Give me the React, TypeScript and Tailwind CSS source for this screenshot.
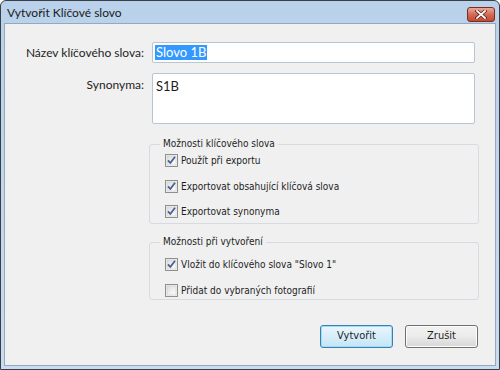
import React from "react";

const font = { fontFamily: 'Lato, "Liberation Sans", sans-serif' };
const tahoma = { fontFamily: '"DejaVu Sans Condensed", "Liberation Sans", sans-serif' };

function Check({ checked }: { checked: boolean }) {
  return (
    <svg width="13" height="13" viewBox="0 0 13 13" className="shrink-0">
      <defs>
        <linearGradient id="cbg" x1="0" y1="0" x2="1" y2="1">
          <stop offset="0" stopColor="#dcdcdc" />
          <stop offset="1" stopColor="#ffffff" />
        </linearGradient>
      </defs>
      <rect x="0.5" y="0.5" width="12" height="12" fill="#f4f4f4" stroke="#8e8f8f" />
      <rect x="2" y="2" width="9" height="9" fill="url(#cbg)" stroke="#c8c8c8" strokeWidth="0.6" />
      {checked && (
        <path d="M3 6.3 L5.3 9 L10 2.8" fill="none" stroke="#4a5f97" strokeWidth="1.8" strokeLinejoin="round" />
      )}
    </svg>
  );
}

function CheckRow({ checked, label }: { checked: boolean; label: string }) {
  return (
    <div className="flex items-center gap-[3px] h-[13px] text-[10px] text-[#1e1e1e]" style={tahoma}>
      <Check checked={checked} />
      <span className="leading-[13px] whitespace-nowrap">{label}</span>
    </div>
  );
}

export default function App() {
  return (
    <div className="w-[500px] h-[370px] overflow-hidden bg-white">
      <div className="w-[500px] h-[370px] border border-[#3a3f45] rounded-t-[6px] bg-gradient-to-b from-[#b9d1ea] to-[#c9dcf0] flex flex-col" style={font}>
        {/* Title bar */}
        <div className="h-[22px] shrink-0 flex items-center justify-between pl-[6px] pr-[4px]">
          <span className="text-[12px] text-[#1a1a1a] leading-none mt-[2px]">Vytvořit Klíčové slovo</span>
          <div className="relative w-[28px] h-[15px] mt-[4px] rounded-[3px] border border-[#7a2c22] bg-gradient-to-b from-[#e9a99b] via-[#d46a55] to-[#c24a34] flex items-center justify-center">
            <svg width="12" height="9" viewBox="0 0 12 9">
              <path d="M2 1 L10 8 M10 1 L2 8" stroke="#5a1a10" strokeWidth="3.2" strokeLinecap="square" />
              <path d="M2 1 L10 8 M10 1 L2 8" stroke="#ffffff" strokeWidth="1.8" strokeLinecap="square" />
            </svg>
          </div>
        </div>
        {/* Content */}
        <div className="flex-1 mx-[3px] mb-[3px] border border-[#93a9c0] bg-[#f0f0f0] pt-[18px] text-[12px] text-[#1e1e1e]">
          {/* Row 1 */}
          <div className="flex items-center">
            <div className="w-[140px] text-right pr-[1px] whitespace-nowrap">Název klíčového slova:</div>
            <div className="ml-[7px] w-[323px] h-[21px] border border-[#b6c6d6] rounded-[2px] bg-white flex items-center pl-[2px]">
              <span className="bg-[#3399ff] text-white px-[1px] text-[13px] leading-[15px]">Slovo 1B</span>
            </div>
          </div>
          {/* Row 2 */}
          <div className="flex items-start mt-[10px]">
            <div className="w-[140px] text-right pr-[1px] pt-[3px]">Synonyma:</div>
            <div className="ml-[7px] w-[323px] h-[51px] border border-[#b6c6d6] rounded-[2px] bg-white pl-[3px] pt-[3px] text-[13px]">S1B</div>
          </div>
          {/* Group 1 */}
          <fieldset className="ml-[144px] mt-[14px] w-[330px] h-[86px] border border-[#d5dbe0] rounded-[3px] pl-[15px]">
            <legend className="ml-[-5px] px-[3px] text-[10px] leading-[12px] text-[#1e1e1e]" style={tahoma}>Možnosti klíčového slova</legend>
            <div className="flex flex-col gap-[12.5px] mt-[4px]">
              <CheckRow checked label="Použít při exportu" />
              <CheckRow checked label="Exportovat obsahující klíčová slova" />
              <CheckRow checked label="Exportovat synonyma" />
            </div>
          </fieldset>
          {/* Group 2 */}
          <fieldset className="ml-[144px] mt-[12px] w-[330px] h-[64px] border border-[#d5dbe0] rounded-[3px] pl-[15px]">
            <legend className="ml-[-5px] px-[3px] text-[10px] leading-[12px] text-[#1e1e1e]" style={tahoma}>Možnosti při vytvoření</legend>
            <div className="flex flex-col gap-[13px] mt-[10px]">
              <CheckRow checked label={'Vložit do klíčového slova "Slovo 1"'} />
              <CheckRow checked={false} label="Přidat do vybraných fotografií" />
            </div>
          </fieldset>
          {/* Buttons */}
          <div className="flex justify-end gap-[12px] pr-[17px] mt-[25px]">
            <button className="w-[73px] h-[23px] rounded-[3px] border border-[#3c7fb1] bg-gradient-to-b from-[#eaf6fd] to-[#c4e5f6] shadow-[inset_0_0_0_1px_#9fdcf5] text-[11px] text-[#1e1e1e]" style={tahoma}>Vytvořit</button>
            <button className="w-[73px] h-[23px] rounded-[3px] border border-[#707070] bg-gradient-to-b from-[#f2f2f2] via-[#ebebeb] to-[#d6d6d6] shadow-[inset_0_0_0_1px_#fcfcfc] text-[11px] text-[#1e1e1e]" style={tahoma}>Zrušit</button>
          </div>
        </div>
      </div>
    </div>
  );
}
